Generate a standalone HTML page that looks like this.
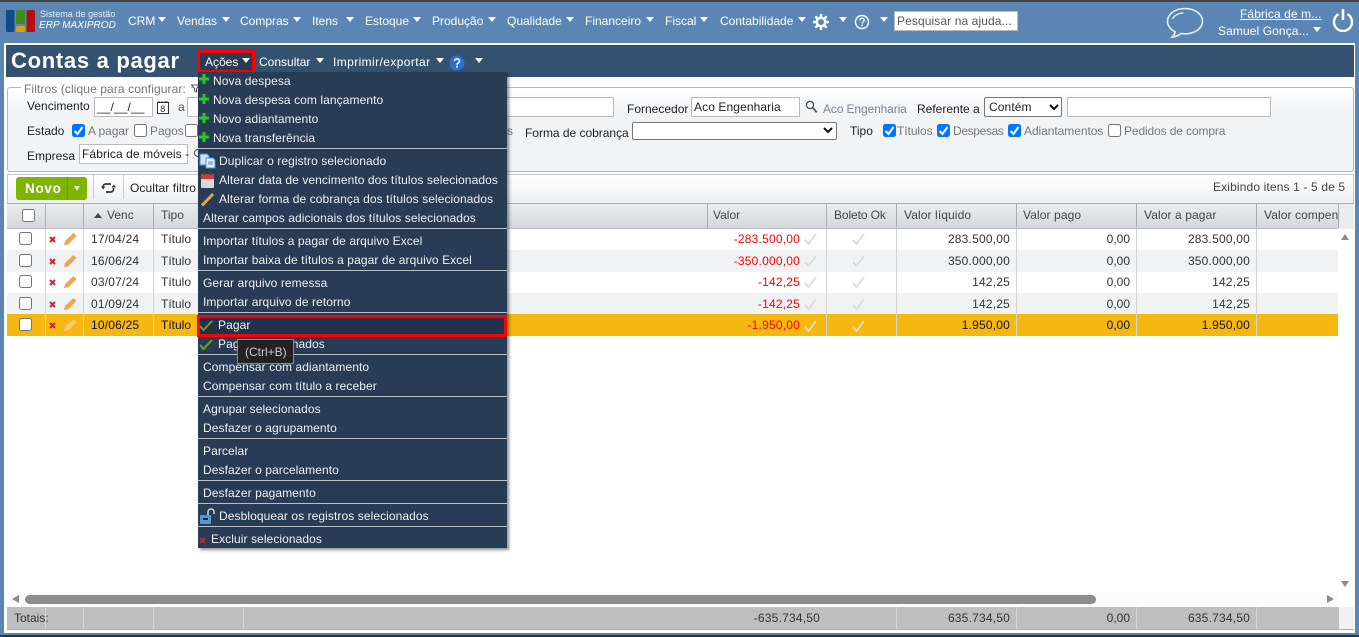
<!DOCTYPE html>
<html lang="pt-BR"><head><meta charset="utf-8"><title>Contas a pagar</title>
<style>
html,body{margin:0;padding:0;width:1359px;height:637px;overflow:hidden;background:#5b86b3;font-family:"Liberation Sans",sans-serif;font-size:12px;color:#333}
div,span,svg,a{position:absolute;box-sizing:border-box}
.t{white-space:nowrap;line-height:14px;height:14px}
.h{color:#fff}
.c{width:0;height:0;border-left:4px solid transparent;border-right:4px solid transparent;border-top:5px solid #fff}
.b{background:#fff;border:1px solid #bbb;color:#222;white-space:nowrap;line-height:15px;padding-left:2px}
.cb{width:13px;height:13px;background:#fff;border:1px solid #767676;border-radius:2.5px}
.ck{width:13px;height:13px;background:#0075ff;border-radius:2.5px}
.g{color:#777;letter-spacing:-.06px}
.m{color:#eef1f4;letter-spacing:.08px}
.sep{left:198px;width:309px;height:1px;background:#b9c0c8}
.r{left:7px;width:1331px}
.vl{width:1px;background:#d2d4d6}
.n{text-align:right;width:100px}
.th{color:#444}
</style></head><body>
<div style="left:0;top:0;width:1359px;height:2px;background:#444"></div>
<div style="left:0;top:2px;width:1359px;height:41px;background:#5b86b3"></div>
<!-- logo -->
<svg style="left:5px;top:9px" width="32" height="24" viewBox="0 0 32 24"><rect x="1" y="1" width="8.500" height="22" rx="1.500" fill="#124a86"/><rect x="11" y="1" width="9" height="14" rx="1.500" fill="#3d8c1c"/><rect x="11" y="17" width="9" height="6" rx="1.500" fill="#dca01c"/><rect x="21.500" y="1" width="8.500" height="22" rx="1.500" fill="#b40f14"/></svg>
<span class="t h" style="left:40px;top:7px;font-size:9px;letter-spacing:.05px;color:#e6edf4">Sistema de gestão</span>
<span class="t h" style="left:39px;top:19px;font-size:10px;font-style:italic;letter-spacing:.05px">ERP MAXIPROD</span>
<span class="t h" style="left:128px;top:14px">CRM</span><div class="c" style="left:158px;top:17px"></div>
<span class="t h" style="left:177px;top:14px">Vendas</span><div class="c" style="left:222px;top:17px"></div>
<span class="t h" style="left:240px;top:14px">Compras</span><div class="c" style="left:293px;top:17px"></div>
<span class="t h" style="left:312px;top:14px">Itens</span><div class="c" style="left:346px;top:17px"></div>
<span class="t h" style="left:365px;top:14px">Estoque</span><div class="c" style="left:413px;top:17px"></div>
<span class="t h" style="left:432px;top:14px">Produção</span><div class="c" style="left:488px;top:17px"></div>
<span class="t h" style="left:507px;top:14px">Qualidade</span><div class="c" style="left:566px;top:17px"></div>
<span class="t h" style="left:585px;top:14px">Financeiro</span><div class="c" style="left:646px;top:17px"></div>
<span class="t h" style="left:665px;top:14px">Fiscal</span><div class="c" style="left:700px;top:17px"></div>
<span class="t h" style="left:720px;top:14px">Contabilidade</span><div class="c" style="left:798px;top:17px"></div>
<svg style="left:813px;top:14px" width="16" height="16" viewBox="0 0 16 16"><circle cx="8" cy="8" r="4.200" fill="none" stroke="#fff" stroke-width="2.400"/><path d="M8 0v3M8 13v3M0 8h3M13 8h3M2.300 2.300l2.200 2.200M11.500 11.500l2.200 2.200M2.300 13.700l2.200-2.200M11.500 4.500l2.200-2.200" stroke="#fff" stroke-width="2.400"/></svg>
<div class="c" style="left:839px;top:17px"></div>
<svg style="left:854px;top:14px" width="16" height="16" viewBox="0 0 16 16"><circle cx="8" cy="8" r="6.500" fill="none" stroke="#fff" stroke-width="1.400"/><path d="M5.800 6.200c.2-2.600 4.500-2.600 4.500 0 0 1.700-2.300 1.700-2.300 3.400" fill="none" stroke="#fff" stroke-width="1.300"/><rect x="7.300" y="10.600" width="1.400" height="1.500" fill="#fff"/></svg>
<div class="c" style="left:880px;top:17px"></div>
<div class="b" style="left:894px;top:11px;width:124px;height:20px;color:#555;padding-left:2px;line-height:18px;letter-spacing:.1px">Pesquisar na ajuda...</div>
<svg style="left:1166px;top:7px" width="38" height="32" viewBox="0 0 38 32"><path d="M19 1.500C9 1.500 1.500 7.200 1.500 14.200c0 4.600 3.200 8.500 7.700 10.600-.4 2-1.400 3.800-3 5.200 3.600-.3 6.600-1.600 8.700-3.600 1.300.3 2.700.4 4.100.4 10 0 17.500-5.700 17.500-12.600S29 1.500 19 1.500z" fill="none" stroke="#e8f0f7" stroke-width="1.600"/><path d="M6.500 12c1.500-3.500 6-6 11-6" fill="none" stroke="#dbe6f0" stroke-width="1.500"/></svg>
<span class="t h" style="left:1240px;top:7px;text-decoration:underline;letter-spacing:.1px">Fábrica de m...</span>
<span class="t h" style="left:1218px;top:24px;letter-spacing:.1px">Samuel Gonça...</span><div class="c" style="left:1313px;top:27px"></div>
<svg style="left:1332px;top:8px" width="22" height="24" viewBox="0 0 22 24"><path d="M6.500 6.200a9 9 0 1 0 9 0" fill="none" stroke="#fff" stroke-width="2.400"/><path d="M11 1v11" stroke="#fff" stroke-width="2.600"/></svg>

<!-- page frame -->
<div style="left:4px;top:43px;width:1351px;height:590px;background:#fff"></div>
<div style="left:6px;top:45px;width:1348px;height:32px;background:#34526f"></div>
<span class="t" style="left:11px;top:49px;height:24px;line-height:24px;font-size:22px;font-weight:bold;color:#fff;letter-spacing:.7px">Contas a pagar</span>
<div style="left:197px;top:50px;width:58px;height:23px;background:#283c55;border:3px solid #f00"></div>
<span class="t h" style="left:205px;top:55px">Ações</span><div class="c" style="left:242px;top:58px"></div>
<span class="t h" style="left:259px;top:55px">Consultar</span><div class="c" style="left:316px;top:58px"></div>
<span class="t h" style="left:333px;top:55px;letter-spacing:.4px">Imprimir/exportar</span><div class="c" style="left:436px;top:58px"></div>
<svg style="left:449px;top:55px" width="16" height="16" viewBox="0 0 16 16"><circle cx="8" cy="8" r="7.500" fill="#2f6fce"/><path d="M5.500 6c.2-2.800 5-2.800 5 0 0 1.900-2.500 1.800-2.500 3.700" fill="none" stroke="#fff" stroke-width="1.500"/><rect x="7.100" y="10.800" width="1.800" height="1.800" fill="#fff"/></svg>
<div class="c" style="left:475px;top:58px"></div>

<!-- filter -->
<div style="left:7px;top:87px;width:1347px;height:85px;background:linear-gradient(#fff,#f2f3f5 30%);border:1px solid #b5b9bd;border-radius:3px"></div>
<div style="left:21px;top:86px;width:170px;height:5px;background:#fff"></div>
<span class="t g" style="left:24px;top:82px;letter-spacing:.1px">Filtros (clique para configurar:</span>
<svg style="left:191px;top:84px" width="9" height="9" viewBox="0 0 9 9"><path d="M.500 1h8L5.500 4.500V8L3.500 7V4.500z" fill="#fff" stroke="#555"/></svg>
<span class="t" style="left:27px;top:99px;color:#222">Vencimento</span>
<div class="b" style="left:94px;top:97px;width:59px;height:20px;line-height:18px;letter-spacing:.1px">__/__/__</div>
<svg style="left:156px;top:100px" width="14" height="15" viewBox="0 0 14 15"><rect x="1.500" y="2.500" width="11" height="11" fill="#fff" stroke="#333"/><path d="M3 1v2M6 1v2M9 1v2M11 1v2" stroke="#333"/><text x="4.300" y="12" font-size="9" fill="#333" font-family="Liberation Sans, sans-serif">8</text></svg>
<span class="t" style="left:178px;top:100px;color:#555">a</span>
<div class="b" style="left:187px;top:97px;width:427px;height:20px"></div>
<span class="t" style="left:627px;top:102px;color:#222">Fornecedor</span>
<div class="b" style="left:691px;top:97px;width:109px;height:20px;line-height:18px;letter-spacing:.1px">Aco Engenharia</div>
<svg style="left:805px;top:100px" width="13" height="14" viewBox="0 0 13 14"><circle cx="5" cy="5" r="3.600" fill="none" stroke="#444" stroke-width="1.200"/><path d="M7.800 7.800l4 4.600" stroke="#555" stroke-width="1.800"/></svg>
<span class="t g" style="left:823px;top:102px;color:#7d8590;letter-spacing:-.12px">Aco Engenharia</span>
<span class="t" style="left:917px;top:102px;color:#222">Referente a</span>
<div class="b" style="left:984px;top:97px;width:78px;height:20px;border-color:#767676;border-radius:2px;line-height:18px;padding-left:4px;letter-spacing:.1px">Contém</div>
<svg style="left:1049px;top:104px" width="10" height="7" viewBox="0 0 10 7"><path d="M1 1l4 4 4-4" fill="none" stroke="#111" stroke-width="2"/></svg>
<div class="b" style="left:1067px;top:97px;width:204px;height:20px"></div>

<span class="t" style="left:27px;top:124px;color:#222">Estado</span>
<div class="ck" style="left:72px;top:124px"></div><svg style="left:72px;top:124px" width="13" height="13" viewBox="0 0 13 13"><path d="M2.500 7l3 3 5-7" fill="none" stroke="#fff" stroke-width="2"/></svg>
<span class="t g" style="left:88px;top:124px">A pagar</span>
<div class="cb" style="left:134px;top:124px"></div><span class="t g" style="left:150px;top:124px">Pagos</span>
<div class="cb" style="left:185px;top:124px"></div>
<span class="t g" style="left:507px;top:124px">s</span>
<span class="t" style="left:525px;top:126px;color:#222;letter-spacing:-.02px">Forma de cobrança</span>
<div class="b" style="left:632px;top:122px;width:205px;height:18px;border-color:#767676;border-radius:2px"></div>
<svg style="left:823px;top:127px" width="10" height="7" viewBox="0 0 10 7"><path d="M1 1l4 4 4-4" fill="none" stroke="#111" stroke-width="2"/></svg>
<span class="t" style="left:850px;top:124px;color:#222">Tipo</span>
<div class="ck" style="left:883px;top:124px"></div><svg style="left:883px;top:124px" width="13" height="13" viewBox="0 0 13 13"><path d="M2.500 7l3 3 5-7" fill="none" stroke="#fff" stroke-width="2"/></svg>
<span class="t g" style="left:897px;top:124px">Títulos</span>
<div class="ck" style="left:937px;top:124px"></div><svg style="left:937px;top:124px" width="13" height="13" viewBox="0 0 13 13"><path d="M2.500 7l3 3 5-7" fill="none" stroke="#fff" stroke-width="2"/></svg>
<span class="t g" style="left:953px;top:124px;letter-spacing:-.35px">Despesas</span>
<div class="ck" style="left:1008px;top:124px"></div><svg style="left:1008px;top:124px" width="13" height="13" viewBox="0 0 13 13"><path d="M2.500 7l3 3 5-7" fill="none" stroke="#fff" stroke-width="2"/></svg>
<span class="t g" style="left:1024px;top:124px">Adiantamentos</span>
<div class="cb" style="left:1108px;top:124px"></div><span class="t g" style="left:1124px;top:124px;letter-spacing:-.12px">Pedidos de compra</span>
<span class="t" style="left:27px;top:149px;color:#222">Empresa</span>
<div class="b" style="left:79px;top:144px;width:109px;height:20px;line-height:18px;letter-spacing:.1px">Fábrica de móveis -</div>
<div style="left:194px;top:149px;width:8px;height:8px;border:1px solid #555;border-radius:50%"></div>

<!-- toolbar -->
<div style="left:7px;top:174px;width:1347px;height:29px;background:linear-gradient(#fff,#eeeff1);border:1px solid #c4c7ca;border-bottom:0"></div>
<div style="left:16px;top:177px;width:71px;height:23px;background:#7eb500;border-radius:3px"></div>
<span class="t" style="left:25px;top:182px;font-size:13.500px;font-weight:bold;color:#fff;letter-spacing:.7px">Novo</span>
<div style="left:67px;top:177px;width:1px;height:23px;background:#6a9a00"></div>
<div class="c" style="left:74px;top:186px;border-left-width:3px;border-right-width:3px;border-top-color:#e8f2c8"></div>
<div class="vl" style="left:93px;top:175px;height:24px;background:#c8cacc"></div>
<svg style="left:101px;top:181px" width="15" height="14" viewBox="0 0 15 14"><path d="M2 7V5.500C2 4 3.500 3 5 3h5M5 11h4.500c1.500 0 3-1 3-2.500V7" fill="none" stroke="#333" stroke-width="1.700"/><path d="M0 5.500l2.200 3 2.300-3zM10.500 6.500l2.200-3L15 6.500z" fill="#333"/></svg>
<div class="vl" style="left:123px;top:175px;height:24px;background:#c8cacc"></div>
<span class="t" style="left:130px;top:181px;color:#222;letter-spacing:.1px">Ocultar filtro</span>
<span class="t" style="left:1213px;top:180px;color:#444;letter-spacing:.14px">Exibindo itens 1 - 5 de 5</span>

<!-- table head -->
<div style="left:7px;top:203px;width:1331px;height:26px;background:linear-gradient(#eceded,#d3d6da);border-top:1px solid #a9adb1;border-bottom:1px solid #b8bbbf"></div>
<div style="left:1338px;top:203px;width:16px;height:26px;background:#e9ebed;border-top:1px solid #a9adb1"></div>
<div class="vl" style="left:45px;top:204px;height:24px;background:#a9adb1"></div>
<div class="vl" style="left:83px;top:204px;height:24px;background:#a9adb1"></div>
<div class="vl" style="left:153px;top:204px;height:24px;background:#a9adb1"></div>
<div class="vl" style="left:707px;top:204px;height:24px;background:#a9adb1"></div>
<div class="vl" style="left:826px;top:204px;height:24px;background:#a9adb1"></div>
<div class="vl" style="left:896px;top:204px;height:24px;background:#a9adb1"></div>
<div class="vl" style="left:1016px;top:204px;height:24px;background:#a9adb1"></div>
<div class="vl" style="left:1136px;top:204px;height:24px;background:#a9adb1"></div>
<div class="vl" style="left:1256px;top:204px;height:24px;background:#a9adb1"></div>
<div class="vl" style="left:1338px;top:204px;height:24px;background:#a9adb1"></div>
<div class="cb" style="left:22px;top:209px"></div>
<div style="left:94px;top:213px;width:0;height:0;border-left:4px solid transparent;border-right:4px solid transparent;border-bottom:5px solid #444"></div>
<span class="t th" style="left:107px;top:208px">Venc</span>
<span class="t th" style="left:161px;top:208px">Tipo</span>
<span class="t th" style="left:713px;top:208px">Valor</span>
<span class="t th" style="left:834px;top:208px;letter-spacing:-.1px">Boleto Ok</span>
<span class="t th" style="left:904px;top:208px;letter-spacing:.1px">Valor líquido</span>
<span class="t th" style="left:1023px;top:208px;letter-spacing:.1px">Valor pago</span>
<span class="t th" style="left:1144px;top:208px;letter-spacing:.1px">Valor a pagar</span>
<div style="left:1264px;top:208px;width:74px;height:14px;overflow:hidden"><span class="t th" style="left:0;top:0;letter-spacing:.1px">Valor compensado</span></div>

<!-- rows -->
<div class="r" style="top:229px;height:21px;background:#fff"></div>
<div class="r" style="top:250px;height:22px;background:#f1f2f4"></div>
<div class="r" style="top:272px;height:21px;background:#fff"></div>
<div class="r" style="top:293px;height:21px;background:#f1f2f4"></div>
<div class="r" style="top:314px;height:22px;background:#f5b712"></div>
<div class="vl" style="left:45px;top:229px;height:107px"></div>
<div class="vl" style="left:83px;top:229px;height:107px"></div>
<div class="vl" style="left:153px;top:229px;height:107px"></div>
<div class="vl" style="left:826px;top:229px;height:107px"></div>
<div class="vl" style="left:896px;top:229px;height:107px"></div>
<div class="vl" style="left:1016px;top:229px;height:107px"></div>
<div class="vl" style="left:1136px;top:229px;height:107px"></div>
<div class="vl" style="left:1256px;top:229px;height:107px"></div>

<div class="cb" style="left:19px;top:232px"></div>
<div class="cb" style="left:19px;top:254px"></div>
<div class="cb" style="left:19px;top:275px"></div>
<div class="cb" style="left:19px;top:297px"></div>
<div class="cb" style="left:19px;top:318px"></div>

<svg style="left:49px;top:236px" width="7" height="7" viewBox="0 0 7 7"><path d="M1 1l5 5M6 1L1 6" stroke="#c8282c" stroke-width="2"/></svg>
<svg style="left:49px;top:258px" width="7" height="7" viewBox="0 0 7 7"><path d="M1 1l5 5M6 1L1 6" stroke="#c8282c" stroke-width="2"/></svg>
<svg style="left:49px;top:279px" width="7" height="7" viewBox="0 0 7 7"><path d="M1 1l5 5M6 1L1 6" stroke="#c8282c" stroke-width="2"/></svg>
<svg style="left:49px;top:301px" width="7" height="7" viewBox="0 0 7 7"><path d="M1 1l5 5M6 1L1 6" stroke="#c8282c" stroke-width="2"/></svg>
<svg style="left:49px;top:322px" width="7" height="7" viewBox="0 0 7 7"><path d="M1 1l5 5M6 1L1 6" stroke="#c8282c" stroke-width="2"/></svg>

<svg style="left:63px;top:232px" width="14" height="14" viewBox="0 0 14 14"><path d="M1 13l1-4L10.500 1 13.500 4 5 12.500z" fill="#f2a44e"/></svg>
<svg style="left:63px;top:254px" width="14" height="14" viewBox="0 0 14 14"><path d="M1 13l1-4L10.500 1 13.500 4 5 12.500z" fill="#f2a44e"/></svg>
<svg style="left:63px;top:275px" width="14" height="14" viewBox="0 0 14 14"><path d="M1 13l1-4L10.500 1 13.500 4 5 12.500z" fill="#f2a44e"/></svg>
<svg style="left:63px;top:297px" width="14" height="14" viewBox="0 0 14 14"><path d="M1 13l1-4L10.500 1 13.500 4 5 12.500z" fill="#f2a44e"/></svg>
<svg style="left:63px;top:318px" width="14" height="14" viewBox="0 0 14 14"><path d="M1 13l1-4L10.500 1 13.500 4 5 12.500z" fill="#f7c878"/></svg>

<span class="t" style="left:91px;top:232px;letter-spacing:.2px">17/04/24</span><span class="t" style="left:161px;top:232px">Título</span>
<span class="t" style="left:91px;top:254px;letter-spacing:.2px">16/06/24</span><span class="t" style="left:161px;top:254px">Título</span>
<span class="t" style="left:91px;top:275px;letter-spacing:.2px">03/07/24</span><span class="t" style="left:161px;top:275px">Título</span>
<span class="t" style="left:91px;top:297px;letter-spacing:.2px">01/09/24</span><span class="t" style="left:161px;top:297px">Título</span>
<span class="t" style="left:91px;top:318px;letter-spacing:.2px;color:#111">10/06/25</span><span class="t" style="left:161px;top:318px;color:#111">Título</span>

<span class="t n" style="left:700px;top:232px;color:#f00;letter-spacing:.2px">-283.500,00</span>
<span class="t n" style="left:700px;top:254px;color:#f00;letter-spacing:.2px">-350.000,00</span>
<span class="t n" style="left:700px;top:275px;color:#f00;letter-spacing:.2px">-142,25</span>
<span class="t n" style="left:700px;top:297px;color:#f00;letter-spacing:.2px">-142,25</span>
<span class="t n" style="left:700px;top:318px;color:#f00;letter-spacing:.2px">-1.950,00</span>

<svg style="left:804px;top:233px" width="13" height="13" viewBox="0 0 13 13"><path d="M1 7l3.500 4L12 1" fill="none" stroke="#d8dadc" stroke-width="1.800"/></svg>
<svg style="left:804px;top:255px" width="13" height="13" viewBox="0 0 13 13"><path d="M1 7l3.500 4L12 1" fill="none" stroke="#d8dadc" stroke-width="1.800"/></svg>
<svg style="left:804px;top:276px" width="13" height="13" viewBox="0 0 13 13"><path d="M1 7l3.500 4L12 1" fill="none" stroke="#d8dadc" stroke-width="1.800"/></svg>
<svg style="left:804px;top:298px" width="13" height="13" viewBox="0 0 13 13"><path d="M1 7l3.500 4L12 1" fill="none" stroke="#d8dadc" stroke-width="1.800"/></svg>
<svg style="left:804px;top:320px" width="13" height="13" viewBox="0 0 13 13"><path d="M1 7l3.500 4L12 1" fill="none" stroke="#dcdcd8" stroke-width="1.800"/></svg>
<svg style="left:852px;top:233px" width="13" height="13" viewBox="0 0 13 13"><path d="M1 7l3.500 4L12 1" fill="none" stroke="#d8dadc" stroke-width="1.800"/></svg>
<svg style="left:852px;top:255px" width="13" height="13" viewBox="0 0 13 13"><path d="M1 7l3.500 4L12 1" fill="none" stroke="#d8dadc" stroke-width="1.800"/></svg>
<svg style="left:852px;top:276px" width="13" height="13" viewBox="0 0 13 13"><path d="M1 7l3.500 4L12 1" fill="none" stroke="#d8dadc" stroke-width="1.800"/></svg>
<svg style="left:852px;top:298px" width="13" height="13" viewBox="0 0 13 13"><path d="M1 7l3.500 4L12 1" fill="none" stroke="#d8dadc" stroke-width="1.800"/></svg>
<svg style="left:852px;top:320px" width="13" height="13" viewBox="0 0 13 13"><path d="M1 7l3.500 4L12 1" fill="none" stroke="#dcdcd8" stroke-width="1.800"/></svg>

<span class="t n" style="left:910px;top:232px;letter-spacing:.2px">283.500,00</span><span class="t n" style="left:1030px;top:232px">0,00</span><span class="t n" style="left:1150px;top:232px;letter-spacing:.2px">283.500,00</span>
<span class="t n" style="left:910px;top:254px;letter-spacing:.2px">350.000,00</span><span class="t n" style="left:1030px;top:254px">0,00</span><span class="t n" style="left:1150px;top:254px;letter-spacing:.2px">350.000,00</span>
<span class="t n" style="left:910px;top:275px;letter-spacing:.2px">142,25</span><span class="t n" style="left:1030px;top:275px">0,00</span><span class="t n" style="left:1150px;top:275px;letter-spacing:.2px">142,25</span>
<span class="t n" style="left:910px;top:297px;letter-spacing:.2px">142,25</span><span class="t n" style="left:1030px;top:297px">0,00</span><span class="t n" style="left:1150px;top:297px;letter-spacing:.2px">142,25</span>
<span class="t n" style="left:910px;top:318px;letter-spacing:.2px;color:#111">1.950,00</span><span class="t n" style="left:1030px;top:318px;color:#111">0,00</span><span class="t n" style="left:1150px;top:318px;letter-spacing:.2px;color:#111">1.950,00</span>

<!-- scrollbars -->
<div style="left:1341px;top:234px;width:0;height:0;border-left:4.500px solid transparent;border-right:4.500px solid transparent;border-bottom:6px solid #8c8c8c"></div>
<div style="left:1341px;top:581px;width:0;height:0;border-left:4.500px solid transparent;border-right:4.500px solid transparent;border-top:6px solid #8c8c8c"></div>
<div style="left:7px;top:592px;width:1331px;height:14px;background:#fbfbfb"></div>
<div style="left:12px;top:595px;width:0;height:0;border-top:4.500px solid transparent;border-bottom:4.500px solid transparent;border-right:7px solid #8c8c8c"></div>
<div style="left:25px;top:595px;width:1071px;height:9px;background:#8c8c8c;border-radius:5px"></div>
<div style="left:1327px;top:595px;width:0;height:0;border-top:4.500px solid transparent;border-bottom:4.500px solid transparent;border-left:7px solid #8c8c8c"></div>

<!-- totals -->
<div style="left:7px;top:607px;width:1347px;height:23px;background:#bebebe;border-bottom:1px solid #a5abb2"></div>
<div style="left:1339px;top:607px;width:15px;height:22px;background:#eef0f2"></div>
<div class="vl" style="left:45px;top:607px;height:22px;background:#d8d8d8"></div>
<div class="vl" style="left:83px;top:607px;height:22px;background:#d8d8d8"></div>
<div class="vl" style="left:153px;top:607px;height:22px;background:#d8d8d8"></div>
<div class="vl" style="left:243px;top:607px;height:22px;background:#d8d8d8"></div>
<div class="vl" style="left:896px;top:607px;height:22px;background:#d8d8d8"></div>
<div class="vl" style="left:1016px;top:607px;height:22px;background:#d8d8d8"></div>
<div class="vl" style="left:1136px;top:607px;height:22px;background:#d8d8d8"></div>
<div class="vl" style="left:1256px;top:607px;height:22px;background:#d8d8d8"></div>
<span class="t" style="left:14px;top:611px">Totais:</span>
<span class="t n" style="left:720px;top:611px;letter-spacing:.2px">-635.734,50</span>
<span class="t n" style="left:910px;top:611px;letter-spacing:.2px">635.734,50</span>
<span class="t n" style="left:1030px;top:611px">0,00</span>
<span class="t n" style="left:1150px;top:611px;letter-spacing:.2px">635.734,50</span>
<div style="left:0;top:633px;width:1359px;height:2px;background:#5b86b3"></div>
<div style="left:0;top:635px;width:1359px;height:2px;background:#1f3a50"></div>

<!-- menu -->
<div style="left:198px;top:72px;width:309px;height:476px;background:#283c55;box-shadow:2px 2px 3px rgba(0,0,0,.45)"></div>
<div class="sep" style="top:148px"></div><div class="sep" style="top:228px"></div><div class="sep" style="top:270px"></div><div class="sep" style="top:312px"></div><div class="sep" style="top:354px"></div><div class="sep" style="top:396px"></div><div class="sep" style="top:438px"></div><div class="sep" style="top:480px"></div><div class="sep" style="top:503px"></div><div class="sep" style="top:526px"></div>

<svg style="left:199px;top:74px" width="10" height="10" viewBox="0 0 10 10"><path d="M5 0v10M0 5h10" stroke="#2cc52c" stroke-width="3"/></svg>
<svg style="left:199px;top:94px" width="10" height="10" viewBox="0 0 10 10"><path d="M5 0v10M0 5h10" stroke="#2cc52c" stroke-width="3"/></svg>
<svg style="left:199px;top:113px" width="10" height="10" viewBox="0 0 10 10"><path d="M5 0v10M0 5h10" stroke="#2cc52c" stroke-width="3"/></svg>
<svg style="left:199px;top:132px" width="10" height="10" viewBox="0 0 10 10"><path d="M5 0v10M0 5h10" stroke="#2cc52c" stroke-width="3"/></svg>
<span class="t m" style="left:213px;top:74px">Nova despesa</span>
<span class="t m" style="left:213px;top:93px">Nova despesa com lançamento</span>
<span class="t m" style="left:213px;top:112px">Novo adiantamento</span>
<span class="t m" style="left:213px;top:131px">Nova transferência</span>

<svg style="left:199px;top:153px" width="17" height="16" viewBox="0 0 17 16"><path d="M1 1h7l2 2v9H1z" fill="#cfe2f5" stroke="#4a8fd0"/><path d="M7 5h7l2 2v8H7z" fill="#e6f0fa" stroke="#4a8fd0"/><path d="M9 9h5M9 11h5" stroke="#4a8fd0"/></svg>
<span class="t m" style="left:219px;top:154px">Duplicar o registro selecionado</span>
<svg style="left:200px;top:172px" width="15" height="17" viewBox="0 0 15 17"><rect x="1" y="2" width="13" height="14" rx="1" fill="#d8d8d8"/><rect x="1" y="2" width="13" height="5" fill="#d23b34"/><rect x="3" y="0" width="2" height="3" fill="#444"/><rect x="10" y="0" width="2" height="3" fill="#444"/></svg>
<span class="t m" style="left:219px;top:173px">Alterar data de vencimento dos títulos selecionados</span>
<svg style="left:200px;top:192px" width="15" height="15" viewBox="0 0 15 15"><path d="M2 13.500L13 2" stroke="#f2a14a" stroke-width="3"/></svg>
<span class="t m" style="left:219px;top:192px">Alterar forma de cobrança dos títulos selecionados</span>
<span class="t m" style="left:203px;top:211px">Alterar campos adicionais dos títulos selecionados</span>
<span class="t m" style="left:203px;top:234px">Importar títulos a pagar de arquivo Excel</span>
<span class="t m" style="left:203px;top:253px">Importar baixa de títulos a pagar de arquivo Excel</span>
<span class="t m" style="left:203px;top:276px">Gerar arquivo remessa</span>
<span class="t m" style="left:203px;top:295px">Importar arquivo de retorno</span>

<div style="left:197px;top:315px;width:310px;height:22px;background:#23324a;border:3px solid #f00"></div>
<svg style="left:199px;top:319px" width="14" height="13" viewBox="0 0 14 13"><path d="M1 7l3.500 4L13 2" fill="none" stroke="#6ca022" stroke-width="2"/></svg>
<span class="t m" style="left:218px;top:318px">Pagar</span>
<svg style="left:199px;top:338px" width="14" height="13" viewBox="0 0 14 13"><path d="M1 7l3.500 4L13 2" fill="none" stroke="#6ca022" stroke-width="2"/></svg>
<span class="t m" style="left:218px;top:337px">Pagar selecionados</span>
<span class="t m" style="left:203px;top:360px">Compensar com adiantamento</span>
<span class="t m" style="left:203px;top:379px">Compensar com título a receber</span>
<span class="t m" style="left:203px;top:402px">Agrupar selecionados</span>
<span class="t m" style="left:203px;top:421px">Desfazer o agrupamento</span>
<span class="t m" style="left:203px;top:444px">Parcelar</span>
<span class="t m" style="left:203px;top:463px">Desfazer o parcelamento</span>
<span class="t m" style="left:203px;top:486px">Desfazer pagamento</span>
<svg style="left:199px;top:508px" width="17" height="17" viewBox="0 0 17 17"><path d="M9 7V4c0-4 6-4 6 0v2" fill="none" stroke="#d4d8dc" stroke-width="1.500"/><rect x="1" y="7" width="11" height="9" rx="1" fill="#4d9ad6"/><rect x="4" y="10" width="5" height="2" fill="#123"/></svg>
<span class="t m" style="left:219px;top:509px">Desbloquear os registros selecionados</span>
<svg style="left:199px;top:537px" width="7" height="7" viewBox="0 0 7 7"><path d="M1 1l5 5M6 1L1 6" stroke="#c8282c" stroke-width="2"/></svg>
<span class="t m" style="left:211px;top:532px">Excluir selecionados</span>

<!-- tooltip -->
<div style="left:237px;top:339px;width:57px;height:25px;background:#222;border:1px solid #8a8a8a"></div>
<span class="t" style="left:245px;top:345px;color:#ccc">(Ctrl+B)</span>
</body></html>
